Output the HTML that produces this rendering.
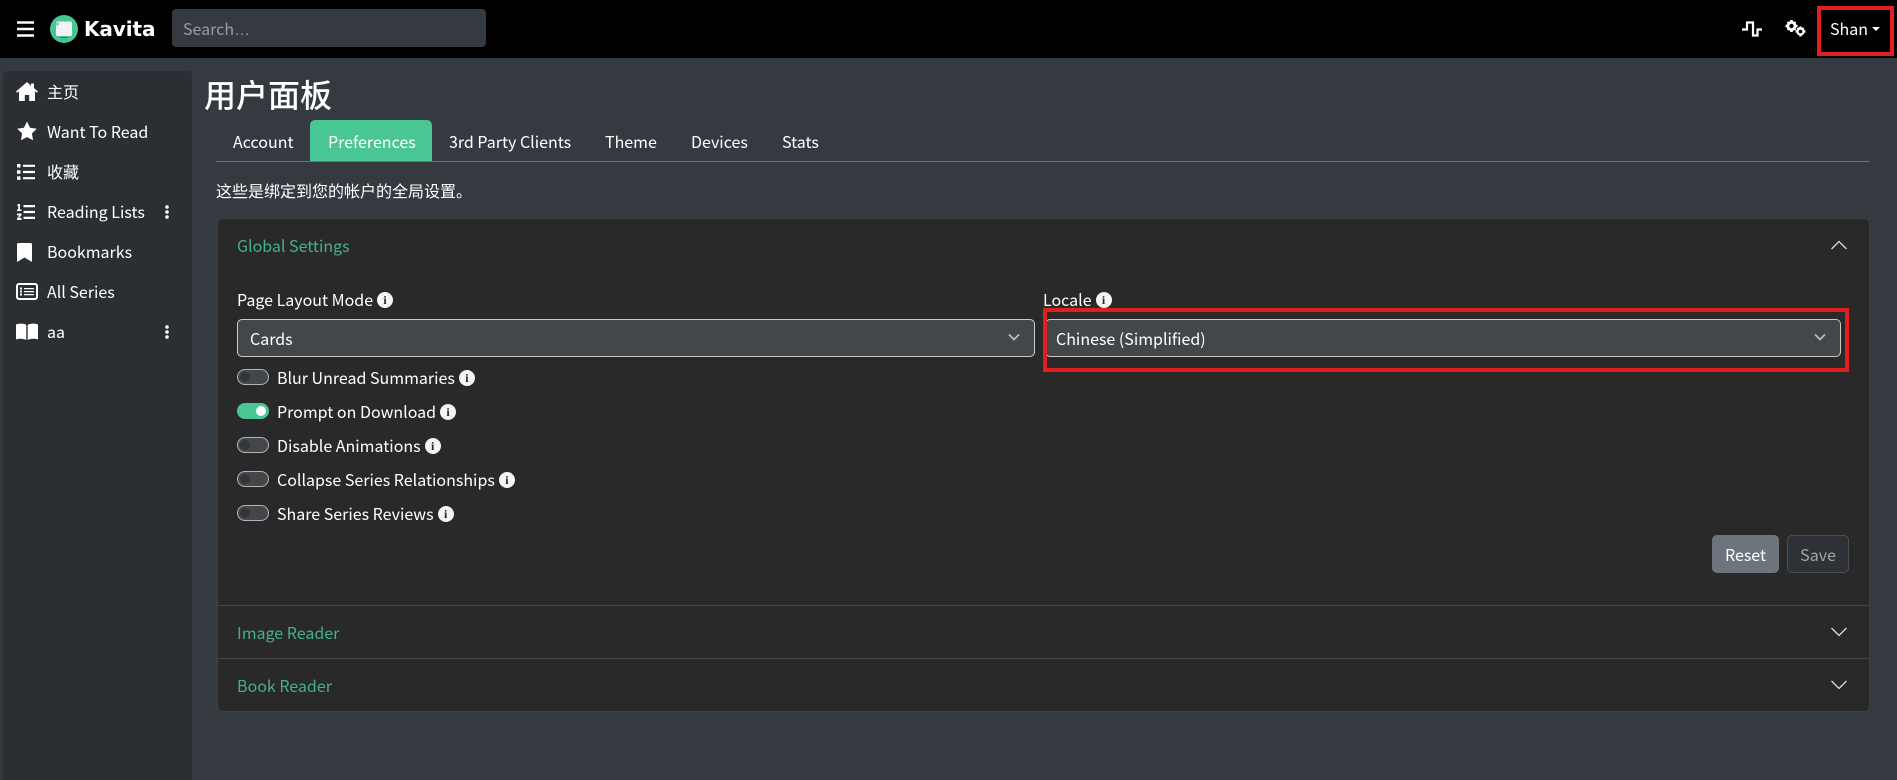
<!DOCTYPE html>
<html lang="zh">
<head>
<meta charset="utf-8">
<title>Kavita</title>
<style>
html,body{margin:0;padding:0;width:1897px;height:780px;overflow:hidden;background:#343a40;}
body{position:relative;font-family:"Noto Sans CJK SC","Liberation Sans",sans-serif;font-size:16px;color:#fff;}
.a{position:absolute;}
.t{position:absolute;white-space:nowrap;line-height:24px;height:24px;}
svg{position:absolute;display:block;}
.sw{position:absolute;left:237px;width:32px;height:16px;box-sizing:border-box;border:1px solid #b4b6b8;border-radius:8px;background:#43474b;}
.sw i{position:absolute;left:2px;top:2px;width:10px;height:10px;border-radius:50%;background:#333639;}
.sw.on{background:#4ac694;border-color:#4ac694;}
.sw.on i{left:18px;background:#fff;}
.sel{position:absolute;top:319px;height:38px;box-sizing:border-box;background:#43474b;border:1px solid #c9cacb;border-radius:5px;}
.g{color:#45b087;}
.i{display:inline-block;position:relative;width:16px;height:16px;border-radius:50%;background:#f4f4f4;vertical-align:-2px;margin-left:4px;}
.i::after{content:"i";position:absolute;left:0;top:0;width:16px;text-align:center;font:bold 12px/16px "Liberation Serif",serif;color:#292929;}
.div{position:absolute;left:217px;width:1653px;height:1px;background:#444;}
</style>
</head>
<body>
<!-- header -->
<div class="a" style="left:0;top:0;width:1897px;height:58px;background:#000;"></div>
<svg style="left:17px;top:21px" width="17" height="16" viewBox="0 0 17 16"><path d="M0 1.500H17M0 8H17M0 14.500H17" stroke="#fff" stroke-width="2.600"/></svg>
<svg style="left:50px;top:15px" width="28" height="28" viewBox="0 0 28 28"><circle cx="14" cy="14" r="14" fill="#4ac694"/><rect x="6" y="6.500" width="16" height="14.500" rx="1.500" fill="#eef3f5"/><path d="M6.500 7.500h2v3h-2z" fill="#4ac694"/><path d="M10 22h8v1h-8z" fill="#2f7f60"/></svg>
<div class="t" style="left:84px;top:15px;font-family:'DejaVu Sans',sans-serif;font-weight:bold;font-size:20px;line-height:28px;height:28px;letter-spacing:-.1px;">Kavita</div>
<div class="a" style="left:172px;top:9px;width:314px;height:38px;background:#343a40;border-radius:4px;"></div>
<div class="t" style="left:183px;top:16px;color:#999c9f;">Search<span style="font-family:'Liberation Sans',sans-serif;">…</span></div>
<svg style="left:1742px;top:21px" width="20" height="16" viewBox="0 0 20 16"><path d="M0 8.500H5V1.500H11V14.500H15.500V8.500H20" fill="none" stroke="#fff" stroke-width="2.200"/></svg>
<svg style="left:1785px;top:20px" width="21" height="17" viewBox="0 0 21 17" fill="#fff"><circle cx="6.500" cy="6" r="3.600" fill="none" stroke="#fff" stroke-width="2.800"/><path d="M5.200 0h2.600v2H5.200zM5.200 10h2.600v2H5.200zM.5 4.700h2v2.600h-2zM10.500 4.700h2v2.600h-2zM1.800 2.600l1.400-1.400 1.400 1.400-1.400 1.400zM8.400 9.200l1.400-1.400 1.400 1.400-1.400 1.400zM1.800 9.200l1.400-1.400 1.400 1.400-1.400 1.400zM8.400 2.600l1.400-1.400 1.400 1.400-1.400 1.400z"/><circle cx="15.500" cy="11.500" r="3" fill="none" stroke="#fff" stroke-width="2.400"/><path d="M14.400 6.500h2.200v2h-2.200zM14.400 14.500h2.200v2h-2.200zM10.500 10.400h2v2.200h-2zM18.500 10.400h2v2.200h-2zM11.800 8.700l1.400-1.400 1.400 1.400-1.400 1.400zM16.500 13.400l1.400-1.400 1.400 1.400-1.400 1.400zM11.800 13.400l1.400-1.400 1.400 1.400-1.400 1.400zM16.500 8.700l1.400-1.400 1.400 1.400-1.400 1.400z"/></svg>
<div class="t" style="left:1830px;top:16px;">Shan</div>
<div class="a" style="left:1872px;top:27px;width:0;height:0;border-left:4px solid transparent;border-right:4px solid transparent;border-top:4px solid #fff;"></div>
<div class="a" style="left:1817px;top:6px;width:77px;height:50px;box-sizing:border-box;border:4px solid #e01f1f;"></div>

<!-- sidebar -->
<div class="a" style="left:3px;top:71px;width:189px;height:709px;background:#2b2e33;border-radius:5px 5px 0 0;"></div>
<svg style="left:16px;top:82px" width="22" height="19" viewBox="0 0 22 19" fill="#fff"><path d="M11 0 0 9.500l1 1.300L3 9.200V19h5.800v-6h4.400v6H19V9.200l2 1.600 1-1.300-4-3.400V1.500h-3v2.400z"/></svg>
<svg style="left:17px;top:121px" width="20" height="20" viewBox="0 0 20 20" fill="#fff"><path d="M10 .5l3 6.200 6.800 1-4.900 4.800 1.200 6.800-6.100-3.200-6.100 3.200 1.200-6.800L.2 7.700l6.800-1z"/></svg>
<svg style="left:17px;top:164px" width="18" height="16" viewBox="0 0 18 16" fill="#fff"><path d="M0 0h3.500v3.500H0zM0 6.200h3.500v3.500H0zM0 12.400h3.500v3.500H0zM6 .7h12v2.200H6zM6 6.900h12v2.200H6zM6 13.100h12v2.200H6z"/></svg>
<svg style="left:17px;top:204px" width="18" height="16" viewBox="0 0 18 16" fill="#fff"><path d="M1 0h2v5.500H4.500V7H0V5.500h1.200V1.800H0zM0 9.500h4.500v1.800l-2.500 2.700h2.500v2H0v-1.600l2.500-3H0zM6.500 1h11.500v2.200H6.500zM6.500 6.900h11.500v2.200H6.500zM6.500 12.800h11.500v2.200H6.500z"/></svg>
<svg style="left:17px;top:243px" width="15" height="19" viewBox="0 0 15 19" fill="#fff"><path d="M0 1.500A1.500 1.500 0 0 1 1.500 0h12A1.500 1.500 0 0 1 15 1.500V19l-7.500-4.500L0 19z"/></svg>
<svg style="left:16px;top:283px" width="22" height="17" viewBox="0 0 22 17"><rect x="1" y="1" width="20" height="15" rx="2" fill="none" stroke="#fff" stroke-width="2"/><path d="M4 4.500h2v2H4zM4 7.500h2v2H4zM4 10.500h2v2H4zM8 5h10v1.200H8zM8 8h10v1.200H8zM8 11h10v1.200H8z" fill="#fff"/></svg>
<svg style="left:16px;top:323px" width="22" height="17" viewBox="0 0 22 17" fill="#fff"><path d="M0 1.500C3 .3 7 .3 10.300 1.800V17C7 15.500 3 15.500 0 16.500zM22 1.500C19 .3 15 .3 11.700 1.800V17C15 15.500 19 15.500 22 16.500z"/></svg>
<div class="t" style="left:47px;top:79px;">主页</div>
<div class="t" style="left:47px;top:119px;">Want To Read</div>
<div class="t" style="left:47px;top:159px;">收藏</div>
<div class="t" style="left:47px;top:199px;">Reading Lists</div>
<div class="t" style="left:47px;top:239px;">Bookmarks</div>
<div class="t" style="left:47px;top:279px;">All Series</div>
<div class="t" style="left:47px;top:319px;">aa</div>
<svg style="left:165px;top:205px" width="4" height="14" viewBox="0 0 4 14" fill="#fff"><circle cx="2" cy="2" r="1.800"/><circle cx="2" cy="7" r="1.800"/><circle cx="2" cy="12" r="1.800"/></svg>
<svg style="left:165px;top:325px" width="4" height="14" viewBox="0 0 4 14" fill="#fff"><circle cx="2" cy="2" r="1.800"/><circle cx="2" cy="7" r="1.800"/><circle cx="2" cy="12" r="1.800"/></svg>

<!-- title + tabs -->
<div class="t" style="left:204px;top:73px;font-size:32px;font-weight:500;line-height:42px;height:42px;">用户面板</div>
<div class="a" style="left:310px;top:120px;width:122px;height:41px;background:#4ac694;border-radius:5px 5px 0 0;"></div>
<div class="a" style="left:216px;top:161px;width:1654px;height:1px;background:#3a9070;"></div>
<div class="t" style="left:233px;top:129px;">Account</div>
<div class="t" style="left:328px;top:129px;">Preferences</div>
<div class="t" style="left:449px;top:129px;">3rd Party Clients</div>
<div class="t" style="left:605px;top:129px;">Theme</div>
<div class="t" style="left:691px;top:129px;">Devices</div>
<div class="t" style="left:782px;top:129px;">Stats</div>
<div class="t" style="left:216px;top:178px;">这些是绑定到您的帐户的全局设置。</div>

<!-- card -->
<div class="a" style="left:217px;top:218px;width:1653px;height:494px;box-sizing:border-box;background:#292929;border:1px solid #3e4146;border-radius:5px;"></div>
<div class="t g" style="left:237px;top:233px;">Global Settings</div>
<svg style="left:1831px;top:239px" width="16" height="12" viewBox="0 0 16 12"><path d="M.5 10 8 2.500 15.500 10" fill="none" stroke="#ddd" stroke-width="1.300"/></svg>

<div class="t" style="left:237px;top:287px;">Page Layout Mode<span class="i"></span></div>
<div class="sel" style="left:237px;width:798px;"></div>
<div class="t" style="left:250px;top:326px;">Cards</div>
<svg style="left:1008px;top:333px" width="12" height="8" viewBox="0 0 12 8"><path d="M1 1.500 6 6.500 11 1.500" fill="none" stroke="#bbb" stroke-width="1.800"/></svg>

<div class="t" style="left:1043px;top:287px;">Locale<span class="i"></span></div>
<div class="sel" style="left:1045px;width:796px;"></div>
<div class="t" style="left:1056px;top:326px;">Chinese (Simplified)</div>
<svg style="left:1814px;top:333px" width="12" height="8" viewBox="0 0 12 8"><path d="M1 1.500 6 6.500 11 1.500" fill="none" stroke="#bbb" stroke-width="1.800"/></svg>
<div class="a" style="left:1043px;top:308px;width:806px;height:64px;box-sizing:border-box;border:4px solid #e01f1f;"></div>

<div class="sw" style="top:369px;"><i></i></div>
<div class="t" style="left:277px;top:365px;">Blur Unread Summaries<span class="i"></span></div>
<div class="sw on" style="top:403px;"><i></i></div>
<div class="t" style="left:277px;top:399px;">Prompt on Download<span class="i"></span></div>
<div class="sw" style="top:437px;"><i></i></div>
<div class="t" style="left:277px;top:433px;">Disable Animations<span class="i"></span></div>
<div class="sw" style="top:471px;"><i></i></div>
<div class="t" style="left:277px;top:467px;">Collapse Series Relationships<span class="i"></span></div>
<div class="sw" style="top:505px;"><i></i></div>
<div class="t" style="left:277px;top:501px;">Share Series Reviews<span class="i"></span></div>

<div class="a" style="left:1712px;top:535px;width:67px;height:38px;background:#6c757d;border-radius:5px;"></div>
<div class="t" style="left:1712px;width:67px;text-align:center;top:542px;">Reset</div>
<div class="a" style="left:1787px;top:535px;width:62px;height:38px;box-sizing:border-box;background:#2e3136;border:1px solid #4c5054;border-radius:5px;"></div>
<div class="t" style="left:1787px;width:62px;text-align:center;top:542px;color:#a3a5a7;">Save</div>

<div class="div" style="top:605px;"></div>
<div class="t g" style="left:237px;top:620px;">Image Reader</div>
<svg style="left:1831px;top:626px" width="16" height="12" viewBox="0 0 16 12"><path d="M.5 2 8 9.500 15.500 2" fill="none" stroke="#ddd" stroke-width="1.300"/></svg>
<div class="div" style="top:658px;"></div>
<div class="t g" style="left:237px;top:673px;">Book Reader</div>
<svg style="left:1831px;top:679px" width="16" height="12" viewBox="0 0 16 12"><path d="M.5 2 8 9.500 15.500 2" fill="none" stroke="#ddd" stroke-width="1.300"/></svg>
</body>
</html>
